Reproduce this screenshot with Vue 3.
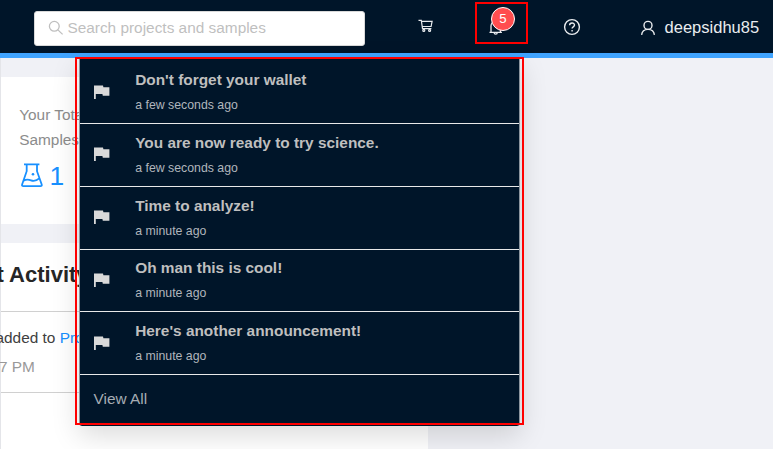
<script setup>
const notices = [
  { title: "Don't forget your wallet", time: 'a few seconds ago' },
  { title: 'You are now ready to try science.', time: 'a few seconds ago' },
  { title: 'Time to analyze!', time: 'a minute ago' },
  { title: 'Oh man this is cool!', time: 'a minute ago' },
  { title: "Here's another announcement!", time: 'a minute ago' },
]
</script>

<template>
  <div class="page">
    <header class="topbar">
      <div class="search">
        <svg class="search-icon" viewBox="0 0 16 16"><circle cx="6.3" cy="6.3" r="4.9" /><path d="M9.9 9.9 14.6 14.4" /></svg>
        <span>Search projects and samples</span>
      </div>
      <svg class="cart" viewBox="0 0 16 16"><path d="M.5 2.4h2.8l1.2 8.3h8.9M3.5 3.3h10.6l-1 5.2H4.4" /><circle cx="5.8" cy="12.4" r="1" /><circle cx="11.6" cy="12.4" r="1" /></svg>
      <div class="bell">
        <svg viewBox="0 0 16 18"><path d="M1.5 14.3h12.4M3 14V8a4.7 4.7 0 0 1 9.4 0v6M7.7 3V1.4M6.1 14.6a1.6 1.6 0 0 0 3.2 0" /></svg>
        <span class="badge">5</span>
      </div>
      <svg class="help" viewBox="0 0 18 18"><circle cx="9" cy="9" r="7.4" /><path d="M6.6 7.3c0-3.1 4.9-3.1 4.9-.2 0 1.8-2.4 1.7-2.4 3.5M9.1 12v1.4" /></svg>
      <div class="user">
        <svg viewBox="0 0 16 16"><circle cx="8" cy="5.4" r="4" /><path d="M1.6 14.8c.4-3.4 2.7-5.4 6.4-5.4s6 2 6.4 5.4" /></svg>
        <span>deepsidhu85</span>
      </div>
    </header>

    <main class="content">
      <section class="card stat">
        <div class="label">Your Total<br />Samples</div>
        <div class="value">
          <svg viewBox="0 0 25 26"><path d="M5 2.4h15.4M7.7 2.4v6.8L3.1 22.4q-.5 1.8 1.3 1.8h17q1.8 0 1.3-1.8L18 9.2V2.4M4.6 18.6c2.6-1.4 4.6-1.4 7.4-.3 3 1.2 5.9.2 8.6-2.2" /><circle class="bubble" cx="14" cy="12.2" r="1.3" /></svg>
          <span>1</span>
        </div>
      </section>
      <section class="card activity">
        <h2>t Activity</h2>
        <div class="entry">
          <p>added to <a>Project</a></p>
          <time>7 PM</time>
        </div>
      </section>
    </main>

    <div class="menu">
      <div v-for="n in notices" :key="n.title" class="notice">
        <svg class="flag" viewBox="0 0 16 14"><path d="M0 .5h9l.4 1.8h6v8.4H8.8L8.4 9H1.8v5H0z" /></svg>
        <div>
          <div class="title">{{ n.title }}</div>
          <div class="time">{{ n.time }}</div>
        </div>
      </div>
      <div class="all">View All</div>
    </div>

    <div class="mark mark-bell"></div>
    <div class="mark mark-menu"></div>
  </div>
</template>

<style>
body { overflow: hidden; }
</style>

<style scoped>
* { box-sizing: border-box; }
.page {
  position: relative;
  width: 773px;
  height: 449px;
  overflow: hidden;
  background: #f0f1f6;
  font-family: "Liberation Sans", Arial, sans-serif;
  font-size: 15.4px;
}
svg { display: block; fill: none; stroke: currentColor; flex: none; }
.topbar {
  display: flex;
  height: 58px;
  padding-left: 34px;
  background: #001529;
  border-bottom: 5px solid #40a4ff;
  color: #e9ecef;
}
.search {
  display: flex;
  align-items: center;
  width: 331px;
  height: 35px;
  margin-top: 11px;
  padding: 0 0 1px 12.5px;
  gap: 3.9px;
  border: 1px solid #d9d9d9;
  border-radius: 3px;
  background: #fff;
  color: #bfbfbf;
}
.search-icon { width: 16px; height: 16px; stroke-width: 1.3; }
.cart { width: 16px; height: 16px; margin: 18px 0 0 52.5px; stroke-width: 1.2; }
.bell { position: relative; width: 16px; height: 18px; margin: 18px 0 0 54px; }
.bell svg { width: 16px; height: 18px; stroke-width: 1.3; }
.badge {
  position: absolute;
  left: 3.5px;
  top: -11px;
  width: 24px;
  height: 24px;
  border: 1px solid #fff;
  border-radius: 12px;
  background: #ff4d4f;
  color: #fff;
  font-size: 13.2px;
  line-height: 22px;
  text-align: center;
}
.help { width: 18px; height: 18px; margin: 18px 0 0 59px; stroke-width: 1.4; }
.user { display: flex; align-items: center; height: 53px; margin-left: 59.5px; gap: 8.6px; font-size: 16.5px; padding-top: 2px; }
.user svg { width: 16px; height: 16px; stroke-width: 1.4; }
.content { width: 428px; border-left: 1px solid #e4e5e9; padding-top: 19px; }
.card { background: #fff; }
.stat { height: 147px; padding: 25px 0 0 18.2px; color: #8c8c8c; }
.label { line-height: 25px; }
.value { display: flex; align-items: center; gap: 5.4px; height: 36px; margin-top: 6px; color: #1890ff; font-size: 26.4px; }
.value svg { width: 25px; height: 26px; stroke-width: 1.8; margin-top: -3px; }
.bubble { fill: currentColor; stroke: none; }
.activity { height: 230px; margin-top: 19px; }
h2 { height: 69px; margin: 0; padding-top: 18px; border-bottom: 1px solid #d0d0d0; color: #262626; font-size: 22px; line-height: 27px; text-indent: -4.5px; white-space: nowrap; }
.entry { height: 81px; border-bottom: 1px solid #d0d0d0; padding-top: 12px; line-height: 27px; color: #404040; }
.entry p { margin: 0; height: 29px; text-indent: -5.5px; }
.entry a { color: #1890ff; }
.entry time { display: block; text-indent: -2px; color: #999; }
.menu {
  position: absolute;
  left: 79px;
  top: 58px;
  width: 441px;
  height: 368px;
  border: solid #8b949d;
  border-width: 0 1px;
  border-radius: 0 0 3px 3px;
  background: #001529;
  box-shadow: 0 9px 28px rgba(0, 0, 0, .15);
}
.notice {
  display: flex;
  height: 62.8px;
  padding: 6.8px 0 0 13.5px;
  border-bottom: 1px solid #e8e8e8;
  color: #bfc3c7;
}
.notice:first-child { height: 66px; padding-top: 10.2px; }
.flag { width: 16px; height: 14px; margin: 16.4px 25.7px 0 0; fill: #d9d9d9; stroke: none; }
.title { font-size: 15.4px; font-weight: bold; line-height: 24px; height: 25.95px; color: #bfbfbf; }
.time { font-size: 12.32px; line-height: 22px; color: #b0b6bc; }
.all { padding: 12px 0 0 13.5px; font-size: 15.4px; line-height: 24px; color: #a6adb4; }
.mark { position: absolute; border: 2px solid #f00; }
.mark-bell { left: 475px; top: 2px; width: 53px; height: 42px; }
.mark-menu { left: 75px; top: 57px; width: 449px; height: 368px; }
</style>
